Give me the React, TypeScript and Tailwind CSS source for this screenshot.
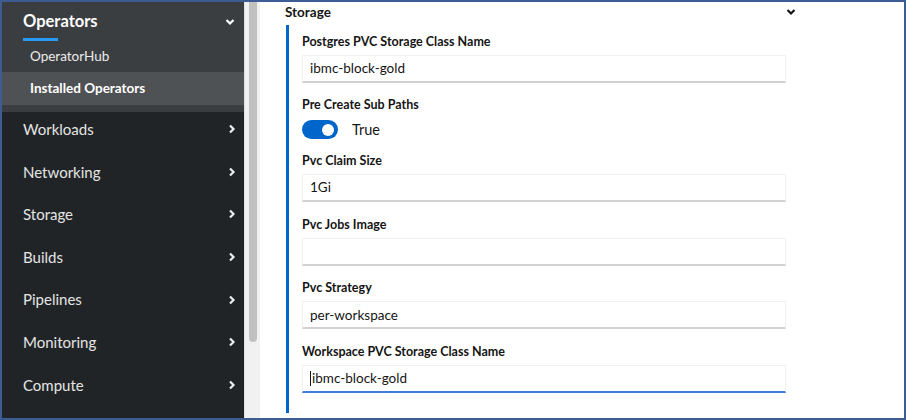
import React from 'react';

const navItems = ['Workloads', 'Networking', 'Storage', 'Builds', 'Pipelines', 'Monitoring', 'Compute'];

const ChevronRight = () => (
  <svg width="8" height="10" viewBox="0 0 8 10" className="shrink-0">
    <path d="M2 1.5 L5.5 5 L2 8.5" fill="none" stroke="#ececec" strokeWidth="2.2" />
  </svg>
);

const ChevronDown = ({ color }: { color: string }) => (
  <svg width="10" height="8" viewBox="0 0 10 8" className="shrink-0">
    <path d="M1.5 2 L5 5.5 L8.5 2" fill="none" stroke={color} strokeWidth="2.2" />
  </svg>
);

const Field = ({
  label,
  value,
  active,
}: {
  label: string;
  value: string;
  active?: boolean;
}) => (
  <div className="flex flex-col">
    <div className="h-[14px] leading-[14px] text-[12.5px] font-bold text-[#151515]">{label}</div>
    <div
      className={
        'mt-[6px] h-[28px] flex items-center pl-[7px] border border-[#f0f0f0] border-b-2 text-[13.5px] text-[#151515] ' +
        (active ? 'border-b-[#3f7dd6]' : 'border-b-[#d2d2d2]')
      }
    >
      {active && <span className="w-px h-[15px] bg-[#151515] mr-[1px]" />}
      {value}
    </div>
  </div>
);

export default function App() {
  return (
    <div
      className="w-[906px] h-[420px] border-2 border-[#3d5c93] flex overflow-hidden bg-white"
      style={{ fontFamily: 'Lato, "Liberation Sans", sans-serif' }}
    >
      {/* sidebar */}
      <div className="w-[242px] shrink-0 bg-[#212427] flex flex-col">
        <div className="h-[110px] bg-[#3b3e41] flex flex-col">
          <div className="h-[36px] flex items-center justify-between pl-[21px] pr-[9px] pt-[3px]">
            <span className="text-[16.5px] font-bold text-white">Operators</span>
            <ChevronDown color="#ffffff" />
          </div>
          <div className="ml-[21px] w-[35px] h-[3px] bg-[#2b9af3]" />
          <div className="h-[31px] flex items-center pl-[28px] text-[13.5px] text-[#ececec]">OperatorHub</div>
          <div className="h-[33px] flex items-center pl-[28px] text-[13.5px] font-bold text-white bg-[#4f5255]">
            Installed Operators
          </div>
        </div>
        {navItems.map((item) => (
          <div
            key={item}
            className="h-[42.6px] shrink-0 flex items-center justify-between pl-[21px] pr-[8px] pb-2 text-[15px] text-[#e4e4e4]"
          >
            <span>{item}</span>
            <ChevronRight />
          </div>
        ))}
      </div>

      {/* scrollbar */}
      <div className="w-[16px] shrink-0 bg-[#f1f1f1] border-l border-[#e0e0e0] flex justify-center">
        <div className="w-[8px] h-[340px] bg-[#c1c1c1] rounded-b-[4px]" />
      </div>

      {/* content */}
      <div className="flex-1 pl-[25px] flex flex-col">
        <div className="h-[20px] w-[515px] flex items-center justify-between pr-[4px]">
          <span className="text-[13.5px] font-bold text-[#151515]">Storage</span>
          <ChevronDown color="#151515" />
        </div>
        <div className="mt-[3px] ml-[1px] h-[388px] border-l-[3px] border-[#0066cc] pl-[13px] pt-[10px] w-[500px] flex flex-col">
          <Field label="Postgres PVC Storage Class Name" value="ibmc-block-gold" />
          <div className="mt-[15px] h-[14px] leading-[14px] text-[12.5px] font-bold text-[#151515]">
            Pre Create Sub Paths
          </div>
          <div className="mt-[7px] flex items-center h-[21px]">
            <div className="w-[36px] h-[19px] rounded-full bg-[#0066cc] flex items-center justify-end pr-[4px]">
              <div className="w-[12px] h-[12px] rounded-full bg-white" />
            </div>
            <span className="ml-[14px] text-[14.5px] text-[#151515]">True</span>
          </div>
          <div className="mt-[14px] flex flex-col gap-[15.7px]">
            <Field label="Pvc Claim Size" value="1Gi" />
            <Field label="Pvc Jobs Image" value="" />
            <Field label="Pvc Strategy" value="per-workspace" />
            <Field label="Workspace PVC Storage Class Name" value="ibmc-block-gold" active />
          </div>
        </div>
      </div>
    </div>
  );
}
